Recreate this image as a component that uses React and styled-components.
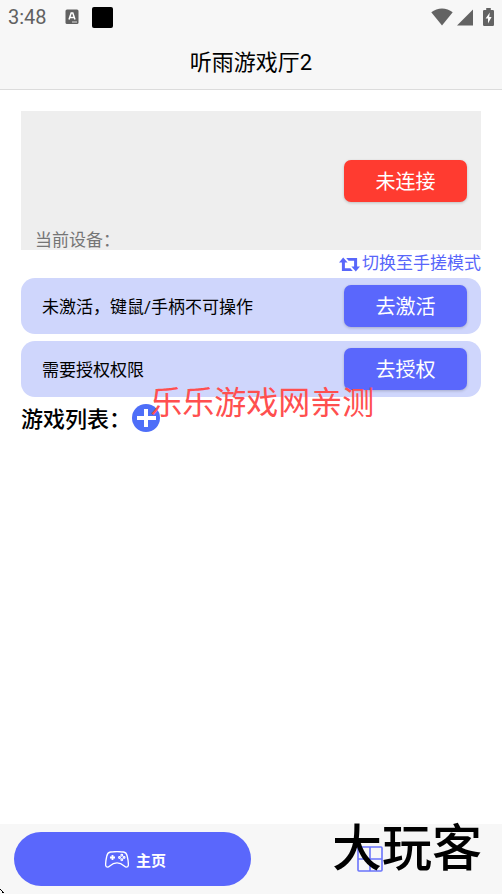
import React from 'react';
import styled, { createGlobalStyle } from "styled-components"

/* icons */
const KeyboardIcon = () => (
  <svg width="14" height="16" viewBox="0 0 14 16" aria-hidden="true">
    <rect x="0.5" y="0.5" width="13" height="14.5" rx="1.5" fill="#616161" />
    <path d="M4 10.5 L6.2 4 H7.8 L10 10.5 M5 8.5 H9" fill="none" stroke="#fff" strokeWidth="1.5" />
    <path d="M7 13 H12" stroke="#ddd" strokeWidth="1" />
  </svg>
)

const WifiIcon = () => (
  <svg width="22" height="18" viewBox="0 0 22 18" aria-hidden="true">
    <path d="M0.3 4.2 C6.5 -0.9 15.5 -0.9 21.7 4.2 L11 17.5 Z" fill="#636363" />
  </svg>
)

const SignalIcon = () => (
  <svg width="16" height="17" viewBox="0 0 16 17" aria-hidden="true">
    <path d="M16 0.5 V16.5 H0 Z" fill="#636363" />
  </svg>
)

const BatteryIcon = () => (
  <svg width="11" height="18" viewBox="0 0 11 18" aria-hidden="true">
    <path d="M3.2 0 H7.8 V2 H9.8 Q11 2 11 3.2 V16.8 Q11 18 9.8 18 H1.2 Q0 18 0 16.8 V3.2 Q0 2 1.2 2 H3.2 Z" fill="#636363" />
    <path d="M6.8 4.5 L2.6 10.6 H5 V15.5 L8.6 9 H6.2 Z" fill="#fff" />
  </svg>
)

const SwitchIcon = () => (
  <svg width="21" height="15" viewBox="0 0 21 15" aria-hidden="true">
    <path d="M4.2 0.5 L8.6 5.6 H5.9 V11.3 H11.4 L13.8 14 H2.9 V5.6 H0 Z" fill="#5866fa" />
    <path d="M16.8 14.5 L12.4 9.4 H15.1 V3.7 H9.6 L7.2 1 H18.1 V9.4 H21 Z" fill="#5866fa" />
  </svg>
)

const PlusIcon = () => (
  <svg width="28" height="28" viewBox="0 0 28 28" aria-hidden="true">
    <circle cx="14" cy="14" r="14" fill="#4e6ef8" />
    <path d="M14 5 V23 M5 14 H24" stroke="#fff" strokeWidth="4" />
  </svg>
)

const GamepadIcon = () => (
  <svg width="24" height="17" viewBox="0 0 24 17" aria-hidden="true" fill="none" stroke="#fff">
    <path
      d="M5.5 1 Q12 0.2 18.5 1 Q21.4 1.4 22.2 5 Q23.4 10 23.4 14 Q23.3 16.2 21.2 16.2 C19.5 16.2 17.8 11.8 12 11.8 S4.5 16.2 2.8 16.2 Q0.7 16.2 0.6 14 Q0.6 10 1.8 5 Q2.6 1.4 5.5 1 Z"
      strokeWidth="1.3"
    />
    <path d="M7.5 4 V9 M5 6.5 H10" strokeWidth="1.8" />
    <circle cx="16.8" cy="4.2" r="0.9" strokeWidth="1.1" />
    <circle cx="16.8" cy="8.8" r="0.9" strokeWidth="1.1" />
    <circle cx="14.5" cy="6.5" r="0.9" strokeWidth="1.1" />
    <circle cx="19.1" cy="6.5" r="0.9" strokeWidth="1.1" />
  </svg>
)

const GridIcon = () => (
  <svg width="26" height="26" viewBox="0 0 26 26" aria-hidden="true" fill="none" stroke="#6a74fb" strokeWidth="1.6">
    <rect x="1" y="1" width="24" height="24" rx="1" />
    <path d="M13 1 V25 M1 13 H25" />
  </svg>
)

const CornerMark = () => (
  <svg width="5" height="5" viewBox="0 0 5 5" aria-hidden="true">
    <path d="M0 0.5 H1 M1 1.5 H2 M2 2.5 H3 M2 3.5 H4" stroke="#000" />
  </svg>
)

const cards = [
  { text: "未激活，键鼠/手柄不可操作", action: "去激活" },
  { text: "需要授权权限", action: "去授权" },
]

class App extends React.Component {
  render(){
    return (
      <React.Fragment>
        <GlobalStyle />
        <Page>
          <Header>
            <StatusBar>
              <Clock>3:48</Clock>
              <KeyboardIcon />
              <BlackBox />
              <StatusRight>
                <WifiIcon />
                <SignalIcon />
                <BatteryIcon />
              </StatusRight>
            </StatusBar>
            <Title>听雨游戏厅2</Title>
          </Header>

          <Content>
            <Device>
              <ActionButton $color="#ff3b30">未连接</ActionButton>
              <DeviceName>当前设备：</DeviceName>
            </Device>
            <ModeLink href="#mode"><SwitchIcon />切换至手搓模式</ModeLink>
            <Cards>
              {cards.map((c) => (
                <Card key={c.action}>
                  <CardText>{c.text}</CardText>
                  <ActionButton $color="#5a67fc">{c.action}</ActionButton>
                </Card>
              ))}
              <Watermark>乐乐游戏网亲测</Watermark>
            </Cards>
            <ListHead>
              <ListTitle>游戏列表：</ListTitle>
              <AddButton aria-label="添加游戏"><PlusIcon /></AddButton>
            </ListHead>
          </Content>

          <TabBar>
            <Tab $active><GamepadIcon />主页</Tab>
            <Tab aria-label="更多"><GridIcon /></Tab>
            <Brand>大玩客</Brand>
            <Corner><CornerMark /></Corner>
          </TabBar>
        </Page>
      </React.Fragment>
    );
  }
}

const GlobalStyle = createGlobalStyle`
  * { box-sizing: border-box; }
  body {
    margin: 0;
    background: #fff;
    color: #000;
    font-family: Roboto, "Noto Sans CJK SC", sans-serif;
  }
  button { font-family: inherit; border: 0; padding: 0; cursor: pointer; }
  svg { display: block; flex: none; }
`

const Page = styled.div`
display: flex;
flex-direction: column;
min-height: 100vh;
`

const Header = styled.header`
background: #f7f7f7;
border-bottom: 1px solid #dcdcdc;
`

const StatusBar = styled.div`
display: flex;
align-items: center;
height: 34px;
padding: 0 8px;
`

const Clock = styled.span`
color: #616161;
font-size: 20px;
font-weight: 400;
line-height: 24px;
margin-right: 18px;
`

const BlackBox = styled.span`
width: 21px;
height: 21px;
margin-left: 13px;
border-radius: 2px;
background: #000;
`

const StatusRight = styled.div`
display: flex;
align-items: center;
gap: 4px;
margin-left: auto;

svg:last-child { margin-left: 6px; }
`

const Title = styled.h1`
margin: 0;
height: 55px;
line-height: 58px;
text-align: center;
font-size: 22px;
font-weight: 400;
`

const Content = styled.main`
display: flex;
flex-direction: column;
flex: 1;
padding: 21px;
`

const Device = styled.section`
display: flex;
flex-direction: column;
align-items: flex-end;
padding: 49px 14px 0;
background: #eeeeee;
`

const ActionButton = styled.button`
width: 123px;
height: 42px;
padding-top: 2px;
border-radius: 7px;
background: ${(props) => props.$color};
color: #fff;
font-size: 20px;
line-height: 40px;
box-shadow: 0 1px 3px rgba(0, 0, 0, 0.2);
`

const DeviceName = styled.p`
align-self: flex-start;
margin: 28px 0 0;
color: #757575;
font-size: 17px;
line-height: 20px;
`

const ModeLink = styled.a`
display: flex;
align-items: center;
align-self: flex-end;
gap: 2px;
height: 28px;
padding-bottom: 2px;
color: #5866fa;
font-size: 17px;
line-height: 24px;
text-decoration: none;

svg { margin-top: 2px; }
`

const Cards = styled.div`
position: relative;
display: flex;
flex-direction: column;
gap: 7px;
`

const Card = styled.div`
display: flex;
align-items: center;
justify-content: space-between;
height: 56px;
padding: 0 14px 0 21px;
border-radius: 14px;
background: #cfd6fc;
`

const CardText = styled.span`
padding-top: 2px;
font-size: 17px;
line-height: 24px;
`

/* lies over the second card and the list heading */
const Watermark = styled.span`
position: absolute;
left: 50%;
bottom: -30px;
transform: translateX(-45%);
color: #ff4f4f;
font-size: 32px;
line-height: 48px;
white-space: nowrap;
pointer-events: none;
`

const ListHead = styled.div`
display: flex;
align-items: center;
gap: 1px;
height: 42px;
`

const ListTitle = styled.h2`
margin: 0;
padding-top: 4px;
font-size: 22px;
font-weight: 500;
line-height: 40px;
`

const AddButton = styled.button`
border-radius: 50%;
background: none;
`

const TabBar = styled.nav`
position: relative;
display: grid;
grid-template-columns: 1fr 1fr;
align-items: center;
height: 70px;
padding: 0 14px;
background: #f7f7f7;
`

const Tab = styled.button`
display: flex;
align-items: center;
justify-content: center;
gap: 7px;
height: 54px;
padding-left: ${(props) => props.$active ? "6px" : "0"};
border-radius: 27px;
background: ${(props) => props.$active ? "#5a67fc" : "none"};
color: #fff;
font-size: 15px;
font-weight: 700;
`

const Brand = styled.span`
position: absolute;
right: 20px;
top: 0;
font-size: 50px;
font-weight: 500;
line-height: 50px;
pointer-events: none;
`

const Corner = styled.span`
position: absolute;
left: 0;
bottom: 0;
`

export default App;
